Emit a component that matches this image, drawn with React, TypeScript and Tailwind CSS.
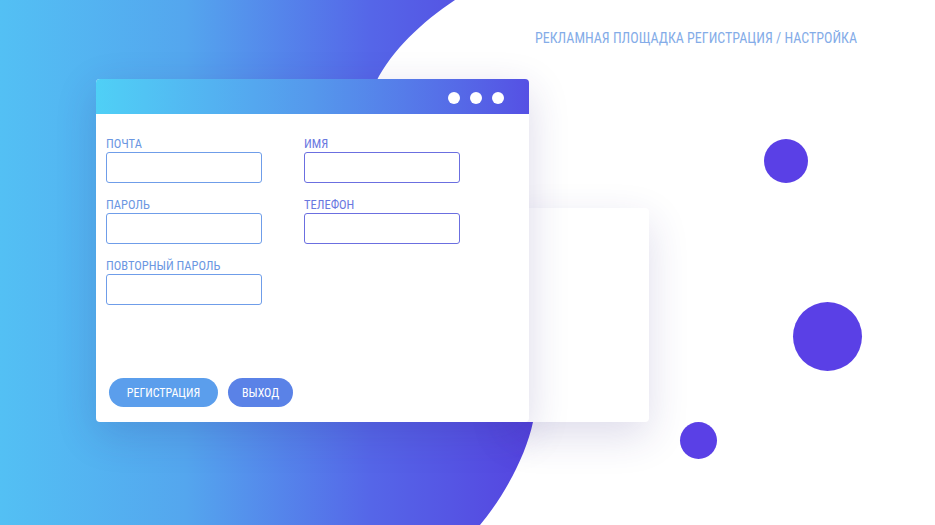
import React from "react";

const font = "font-['Roboto_Condensed','DejaVu_Sans_Condensed',Roboto,sans-serif]";

const Field: React.FC<{ label: string; tone: "blue" | "violet" }> = ({ label, tone }) => (
  <div className="flex flex-col">
    <label className={`text-[12.5px] leading-[16px] ${tone === "blue" ? "text-[#6b97e2]" : "text-[#6a78df]"}`}>
      {label}
    </label>
    <input
      type="text"
      className={`h-[31px] w-[156px] rounded-[3px] border-[1.5px] bg-white outline-none ${
        tone === "blue" ? "border-[#6f9de9]" : "border-[#6b6fe0]"
      }`}
    />
  </div>
);

export default function App() {
  return (
    <div className={`relative h-[525px] w-[935px] overflow-hidden bg-white ${font}`}>
      {/* background blob */}
      <svg className="absolute inset-0" width="935" height="525" viewBox="0 0 935 525">
        <defs>
          <linearGradient id="bg" x1="0" y1="0" x2="530" y2="0" gradientUnits="userSpaceOnUse">
            <stop offset="0" stopColor="#53c0f4" />
            <stop offset="0.35" stopColor="#54a6ee" />
            <stop offset="0.7" stopColor="#5566e8" />
            <stop offset="1" stopColor="#5545e0" />
          </linearGradient>
        </defs>
        <path
          d="M0 0 H455 C422 22 392 50 376 82 C350 140 470 230 520 300 C545 340 540 390 533 422 C526 455 505 495 480 525 H0 Z"
          fill="url(#bg)"
        />
      </svg>

      {/* decorative dots */}
      <div className="absolute left-[764px] top-[139px] h-[44px] w-[44px] rounded-full bg-[#5a40e6]" />
      <div className="absolute left-[793px] top-[302px] h-[69px] w-[69px] rounded-full bg-[#5a40e6]" />
      <div className="absolute left-[680px] top-[422px] h-[37px] w-[37px] rounded-full bg-[#5a40e6]" />

      <div className="relative flex flex-col">
        <div className="h-[79px] pl-[535px] pt-[30px] text-[14px] leading-[16px] text-[#84ace8]">
          РЕКЛАМНАЯ ПЛОЩАДКА РЕГИСТРАЦИЯ / НАСТРОЙКА
        </div>

        <div className="flex items-end pl-[96px]">
          <div className="relative z-10 flex h-[343px] w-[433px] flex-col overflow-hidden rounded-[4px] bg-white shadow-[0_12px_40px_rgba(50,40,130,0.18)]">
            <div className="flex h-[35px] items-center justify-end gap-[10px] bg-gradient-to-r from-[#4fd0f6] via-[#5598ec] to-[#5550e4] pr-[25px] pt-[3px]">
              <span className="h-[12px] w-[12px] rounded-full bg-white" />
              <span className="h-[12px] w-[12px] rounded-full bg-white" />
              <span className="h-[12px] w-[12px] rounded-full bg-white" />
            </div>

            <div className="grid grid-cols-[156px_156px] gap-x-[42px] gap-y-[14px] px-[10px] pt-[22px]">
              <Field label="ПОЧТА" tone="blue" />
              <Field label="ИМЯ" tone="violet" />
              <Field label="ПАРОЛЬ" tone="blue" />
              <Field label="ТЕЛЕФОН" tone="violet" />
              <Field label="ПОВТОРНЫЙ ПАРОЛЬ" tone="blue" />
            </div>

            <div className="mt-auto flex gap-[10px] pb-[15px] pl-[13px]">
              <button className="h-[29px] w-[109px] rounded-full bg-[#5b9eec] text-[12px] text-white">
                РЕГИСТРАЦИЯ
              </button>
              <button className="h-[29px] w-[65px] rounded-full bg-[#5a82e7] text-[12px] text-white">
                ВЫХОД
              </button>
            </div>
          </div>

          <div className="-ml-[20px] h-[214px] w-[140px] rounded-[4px] bg-white shadow-[0_14px_40px_rgba(50,40,130,0.16)]" />
        </div>
      </div>
    </div>
  );
}
